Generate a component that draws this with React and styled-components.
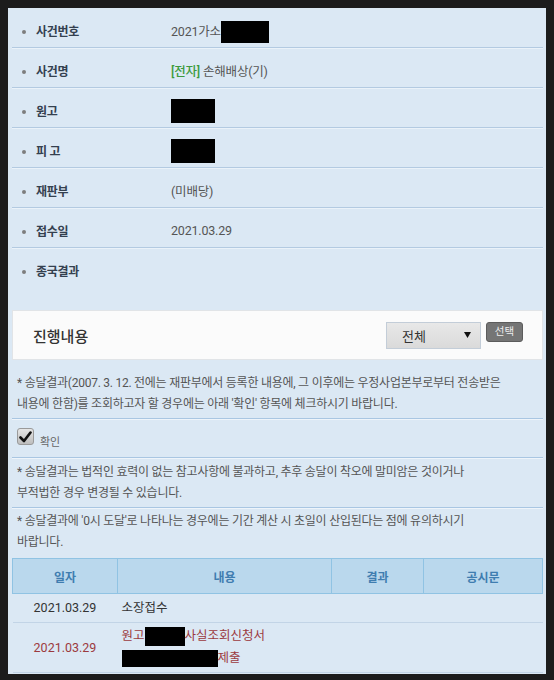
import React from 'react'
import styled, { createGlobalStyle } from 'styled-components'

const GlobalStyle = createGlobalStyle`
  body {
    margin: 0;
    background: #1c1c1c;
    font-family: Roboto, "Noto Sans CJK KR", sans-serif;
  }
`;

const Panel = styled.div`
  margin: 8px;
  background: #dbe8f4;
  padding: 0 3px 1px 4px;
`;

const InfoRow = styled.div`
  display: flex;
  box-sizing: border-box;
  height: ${p => (p.$tall ? '62px' : '40px')};
  padding-top: 14px;
  border-bottom: ${p => (p.$tall ? 'none' : '1px solid #b3cae1')};
  box-shadow: ${p => (p.$tall ? 'none' : '0 1px 0 #eaf2f9')};
`;

const Label = styled.div`
  width: 159px;
  flex-shrink: 0;
  display: flex;
  align-items: center;
  height: 16px;
  padding-left: 10px;
  box-sizing: border-box;
  font-size: 12px;
  font-weight: 700;
  color: #34404f;
  letter-spacing: -0.3px;
`;

const Bullet = styled.span`
  width: 4px;
  height: 4px;
  border-radius: 50%;
  background: #7d7d7d;
  margin: 3px 10px 0 0;
`;

const Value = styled.div`
  display: flex;
  align-items: center;
  height: 16px;
  font-size: 12.5px;
  color: #555;
  letter-spacing: -0.2px;
`;

const Tag = styled.span`
  color: #3c9a3c;
  font-weight: 500;
  margin-right: 3px;
`;

const Redact = styled.span`
  display: inline-block;
  flex-shrink: 0;
  background: #000;
  width: ${p => p.$w}px;
  height: ${p => p.$h}px;
  margin-top: ${p => p.$dy || 0}px;
  vertical-align: middle;
`;

const ProgressBar = styled.div`
  display: flex;
  align-items: center;
  justify-content: space-between;
  box-sizing: border-box;
  height: 50px;
  padding: 0 19px 0 20px;
  background: #fbfbfb;
  border: 1px solid #e1e4e7;
`;

const Title = styled.div`
  font-size: 15px;
  font-weight: 500;
  color: #333;
`;

const Controls = styled.div`
  display: flex;
  align-items: flex-start;
  gap: 5px;
`;

const SelectBox = styled.div`
  display: flex;
  align-items: center;
  justify-content: space-between;
  box-sizing: border-box;
  width: 95px;
  height: 27px;
  padding: 0 9px 0 15px;
  border: 1px solid #c3cdd8;
  background: linear-gradient(#e8e8e8, #dadada);
  font-size: 13px;
  color: #333;
`;

const Button = styled.div`
  box-sizing: border-box;
  width: 37px;
  height: 20px;
  padding-bottom: 3px;
  display: flex;
  align-items: center;
  justify-content: center;
  background: #757575;
  border: 1px solid #5c5c5c;
  border-radius: 3px;
  font-size: 10.5px;
  color: #eee;
`;

const Notice = styled.div`
  padding: ${p => (p.$first ? '13px 5px 3px' : p.$last ? '3px 5px 5px' : '4px 5px 3px')};
  font-size: 12px;
  line-height: 21px;
  color: #555;
  letter-spacing: -0.25px;
  white-space: nowrap;
  border-bottom: ${p => (p.$last ? 'none' : '1px solid #a9c6e2')};
  box-shadow: ${p => (p.$last ? 'none' : '0 1px 0 #eef4fa')};
`;

const CheckRow = styled.div`
  display: flex;
  align-items: flex-start;
  gap: 6px;
  box-sizing: border-box;
  height: 39px;
  padding: 9px 5px 0;
  border-bottom: 1px solid #a9c6e2;
  box-shadow: 0 1px 0 #eef4fa;
`;

const CheckBox = styled.span`
  width: 17px;
  height: 17px;
  box-sizing: border-box;
  border: 1px solid #9a9a9a;
  border-radius: 3px;
  background: linear-gradient(#e6e6e6, #bdbdbd);
  display: flex;
  align-items: center;
  justify-content: center;
`;

const CheckText = styled.span`
  margin-top: 8px;
  font-size: 11px;
  line-height: 14px;
  color: #666;
`;

const Table = styled.table`
  width: 100%;
  border-collapse: collapse;
  table-layout: fixed;
`;

const Th = styled.th`
  height: 34px;
  padding: 0;
  background: #bad8ed;
  border: 1px solid #90c3e3;
  font-size: 12px;
  font-weight: 700;
  color: #3f7db0;
`;

const Tr = styled.tr`
  height: ${p => p.$h}px;
`;

const Td = styled.td`
  padding: ${p => (p.$date ? '0' : '2px 4px 3px')};
  text-align: ${p => (p.$date ? 'center' : 'left')};
  vertical-align: middle;
  font-size: 12.5px;
  line-height: 22px;
  color: ${p => (p.$red ? '#9b3a3e' : '#333')};
  border-bottom: 1px solid #c2d4e6;
`;

const Check = () => (
  <svg width="13" height="12" viewBox="0 0 13 12">
    <path d="M1.5 6.5 L5 10 L11.5 1.5" fill="none" stroke="#111" strokeWidth="2.6" strokeLinecap="round" strokeLinejoin="round" />
  </svg>
);

const Arrow = () => (
  <svg width="7" height="6" viewBox="0 0 7 6">
    <polygon points="0,0 7,0 3.5,6" fill="#111" />
  </svg>
);

const info = [
  { label: '사건번호', value: <>2021가소<Redact $w={48} $h={22} $dy={3} /></> },
  { label: '사건명', value: <><Tag>[전자]</Tag>손해배상(기)</> },
  { label: '원고', value: <Redact $w={44} $h={24} $dy={2} /> },
  { label: '피 고', value: <Redact $w={44} $h={24} $dy={2} /> },
  { label: '재판부', value: '(미배당)' },
  { label: '접수일', value: '2021.03.29' },
];

export default function App() {
  return (
    <>
      <GlobalStyle />
      <Panel>
        {info.map(row => (
          <InfoRow key={row.label}>
            <Label><Bullet />{row.label}</Label>
            <Value>{row.value}</Value>
          </InfoRow>
        ))}
        <InfoRow $tall>
          <Label><Bullet />종국결과</Label>
        </InfoRow>

        <ProgressBar>
          <Title>진행내용</Title>
          <Controls>
            <SelectBox>
              <span>전체</span>
              <Arrow />
            </SelectBox>
            <Button>선택</Button>
          </Controls>
        </ProgressBar>

        <Notice $first>
          * 송달결과(2007. 3. 12. 전에는 재판부에서 등록한 내용에, 그 이후에는 우정사업본부로부터 전송받은<br />
          내용에 한함)를 조회하고자 할 경우에는 아래 '확인' 항목에 체크하시기 바랍니다.
        </Notice>
        <CheckRow>
          <CheckBox><Check /></CheckBox>
          <CheckText>확인</CheckText>
        </CheckRow>
        <Notice>
          * 송달결과는 법적인 효력이 없는 참고사항에 불과하고, 추후 송달이 착오에 말미암은 것이거나<br />
          부적법한 경우 변경될 수 있습니다.
        </Notice>
        <Notice $last>
          * 송달결과에 '0시 도달'로 나타나는 경우에는 기간 계산 시 초일이 산입된다는 점에 유의하시기<br />
          바랍니다.
        </Notice>

        <Table>
          <colgroup>
            <col style={{ width: 105 }} />
            <col style={{ width: 214 }} />
            <col style={{ width: 92 }} />
            <col />
          </colgroup>
          <thead>
            <tr>
              <Th>일자</Th>
              <Th>내용</Th>
              <Th>결과</Th>
              <Th>공시문</Th>
            </tr>
          </thead>
          <tbody>
            <Tr $h={29}>
              <Td $date>2021.03.29</Td>
              <Td>소장접수</Td>
              <Td />
              <Td />
            </Tr>
            <Tr $h={49}>
              <Td $date $red>2021.03.29</Td>
              <Td $red>
                원고<Redact $w={40} $h={19} />사실조회신청서<br />
                <Redact $w={96} $h={17} />제출
              </Td>
              <Td />
              <Td />
            </Tr>
          </tbody>
        </Table>
      </Panel>
    </>
  )
}
